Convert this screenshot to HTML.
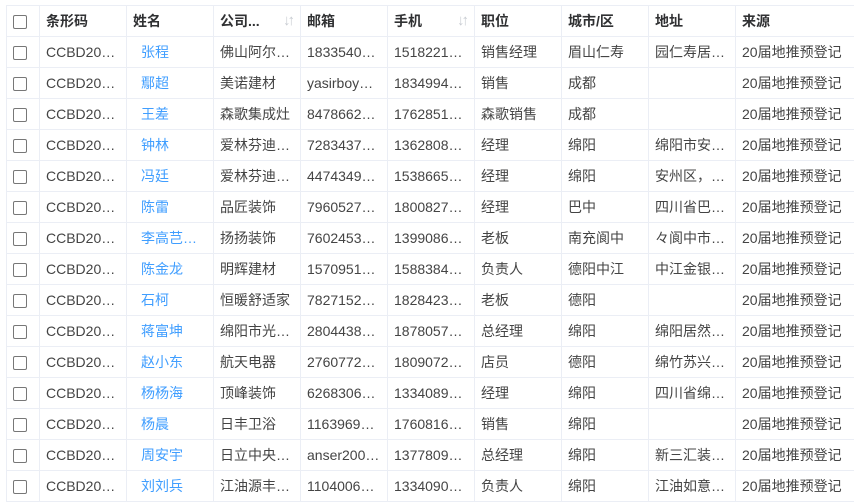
<!DOCTYPE html><html><head><meta charset="utf-8"><style>
body{margin:0;background:#fff;width:854px;height:504px;overflow:hidden;font-family:"Liberation Sans","Noto Sans CJK SC",sans-serif;font-size:14px;color:#444}
table{position:absolute;left:6px;top:5px;border-collapse:collapse;table-layout:fixed;width:854px}
td,th{border:1px solid #ebeef5;height:30px;padding:0 0 0 6px;white-space:nowrap;overflow:hidden;text-overflow:ellipsis;text-align:left}
th{font-weight:bold;color:#303133;position:relative}
td.n{color:#409eff;padding-left:14px}
.cb{display:inline-block;width:12px;height:12px;border:1px solid #777;border-radius:2px;margin-left:6px;vertical-align:middle}
.s{position:absolute;right:8px;top:6px;color:#c8ccd2;font-size:15px;font-weight:bold;letter-spacing:-3px}
</style></head><body>
<table>
<colgroup><col style="width:33px"><col style="width:87px"><col style="width:87px"><col style="width:87px"><col style="width:87px"><col style="width:87px"><col style="width:87px"><col style="width:87px"><col style="width:87px"><col style="width:125px"></colgroup>
<tr><th style="padding:0"><span class="cb"></span></th><th>条形码</th><th>姓名</th><th>公司...<span class="s">↓↑</span></th><th>邮箱</th><th>手机<span class="s">↓↑</span></th><th>职位</th><th>城市/区</th><th>地址</th><th>来源</th></tr>
<tr><td style="padding:0"><span class="cb"></span></td><td>CCBD20…</td><td class="n">张程</td><td>佛山阿尔…</td><td>1833540…</td><td>1518221…</td><td>销售经理</td><td>眉山仁寿</td><td>园仁寿居…</td><td>20届地推预登记</td></tr>
<tr><td style="padding:0"><span class="cb"></span></td><td>CCBD20…</td><td class="n">鄢超</td><td>美诺建材</td><td>yasirboy…</td><td>1834994…</td><td>销售</td><td>成都</td><td></td><td>20届地推预登记</td></tr>
<tr><td style="padding:0"><span class="cb"></span></td><td>CCBD20…</td><td class="n">王差</td><td>森歌集成灶</td><td>8478662…</td><td>1762851…</td><td>森歌销售</td><td>成都</td><td></td><td>20届地推预登记</td></tr>
<tr><td style="padding:0"><span class="cb"></span></td><td>CCBD20…</td><td class="n">钟林</td><td>爱林芬迪…</td><td>7283437…</td><td>1362808…</td><td>经理</td><td>绵阳</td><td>绵阳市安…</td><td>20届地推预登记</td></tr>
<tr><td style="padding:0"><span class="cb"></span></td><td>CCBD20…</td><td class="n">冯廷</td><td>爱林芬迪…</td><td>4474349…</td><td>1538665…</td><td>经理</td><td>绵阳</td><td>安州区，…</td><td>20届地推预登记</td></tr>
<tr><td style="padding:0"><span class="cb"></span></td><td>CCBD20…</td><td class="n">陈雷</td><td>品匠装饰</td><td>7960527…</td><td>1800827…</td><td>经理</td><td>巴中</td><td>四川省巴…</td><td>20届地推预登记</td></tr>
<tr><td style="padding:0"><span class="cb"></span></td><td>CCBD20…</td><td class="n">李高芑…</td><td>扬扬装饰</td><td>7602453…</td><td>1399086…</td><td>老板</td><td>南充阆中</td><td>々阆中市…</td><td>20届地推预登记</td></tr>
<tr><td style="padding:0"><span class="cb"></span></td><td>CCBD20…</td><td class="n">陈金龙</td><td>明辉建材</td><td>1570951…</td><td>1588384…</td><td>负责人</td><td>德阳中江</td><td>中江金银…</td><td>20届地推预登记</td></tr>
<tr><td style="padding:0"><span class="cb"></span></td><td>CCBD20…</td><td class="n">石柯</td><td>恒暖舒适家</td><td>7827152…</td><td>1828423…</td><td>老板</td><td>德阳</td><td></td><td>20届地推预登记</td></tr>
<tr><td style="padding:0"><span class="cb"></span></td><td>CCBD20…</td><td class="n">蒋富坤</td><td>绵阳市光…</td><td>2804438…</td><td>1878057…</td><td>总经理</td><td>绵阳</td><td>绵阳居然…</td><td>20届地推预登记</td></tr>
<tr><td style="padding:0"><span class="cb"></span></td><td>CCBD20…</td><td class="n">赵小东</td><td>航天电器</td><td>2760772…</td><td>1809072…</td><td>店员</td><td>德阳</td><td>绵竹苏兴…</td><td>20届地推预登记</td></tr>
<tr><td style="padding:0"><span class="cb"></span></td><td>CCBD20…</td><td class="n">杨杨海</td><td>顶峰装饰</td><td>6268306…</td><td>1334089…</td><td>经理</td><td>绵阳</td><td>四川省绵…</td><td>20届地推预登记</td></tr>
<tr><td style="padding:0"><span class="cb"></span></td><td>CCBD20…</td><td class="n">杨晨</td><td>日丰卫浴</td><td>1163969…</td><td>1760816…</td><td>销售</td><td>绵阳</td><td></td><td>20届地推预登记</td></tr>
<tr><td style="padding:0"><span class="cb"></span></td><td>CCBD20…</td><td class="n">周安宇</td><td>日立中央…</td><td>anser200…</td><td>1377809…</td><td>总经理</td><td>绵阳</td><td>新三汇装…</td><td>20届地推预登记</td></tr>
<tr><td style="padding:0"><span class="cb"></span></td><td>CCBD20…</td><td class="n">刘刘兵</td><td>江油源丰…</td><td>1104006…</td><td>1334090…</td><td>负责人</td><td>绵阳</td><td>江油如意…</td><td>20届地推预登记</td></tr>
</table>
</body></html>
